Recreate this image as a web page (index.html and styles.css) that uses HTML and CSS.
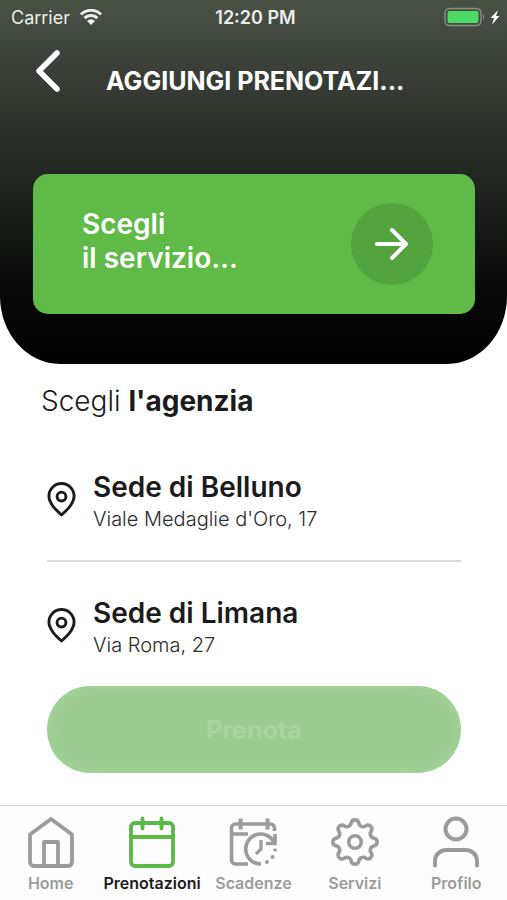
FILE: index.html
```html
<!DOCTYPE html>
<html lang="it">
<head>
<meta charset="utf-8">
<meta name="viewport" content="width=device-width, initial-scale=1">
<title>Aggiungi prenotazione</title>
<link rel="stylesheet" href="styles.css">
</head>
<body>
<div class="app">
  <header class="hero">
    <div class="status">
      <div class="status-left">
        <span>Carrier</span>
        <svg class="wifi" viewBox="0 0 22 16" aria-hidden="true">
          <path d="M1 5.400a14.200 14.200 0 0 1 20 0M4.600 9.100a9 9 0 0 1 12.800 0" fill="none" stroke="currentColor" stroke-width="3"/>
          <path d="M11 16l-4-4.100a5.700 5.700 0 0 1 8 0z" fill="currentColor"/>
        </svg>
      </div>
      <span class="clock">12:20 PM</span>
      <div class="status-right">
        <svg class="battery" viewBox="0 0 56 20" aria-hidden="true">
          <rect x="1" y="1.500" width="36" height="17" rx="4.500" fill="none" stroke="#8b8f89" stroke-width="1.400"/>
          <rect x="3.500" y="4" width="31" height="12" rx="2" fill="#4cd964"/>
          <path d="M39 7q2.500 3 0 6z" fill="#8b8f89"/>
          <path d="M54 3l-7.500 8h3.500l-2 6.500 7.500-8.500h-3.500z" fill="#fff"/>
        </svg>
      </div>
    </div>
    <div class="navbar">
      <button class="back" type="button" aria-label="Indietro">
        <svg viewBox="0 0 24 42" aria-hidden="true"><path d="M21 3L3 21l18 18" fill="none" stroke="currentColor" stroke-width="5.500" stroke-linecap="round" stroke-linejoin="round"/></svg>
      </button>
      <h1>AGGIUNGI PRENOTAZI...</h1>
    </div>
    <button class="service" type="button">
      <span class="service-label">Scegli<br>il servizio...</span>
      <span class="go">
        <svg viewBox="0 0 34 34" aria-hidden="true"><path d="M2 17h29M17 3l14 14-14 14" fill="none" stroke="currentColor" stroke-width="4" stroke-linecap="round" stroke-linejoin="round"/></svg>
      </span>
    </button>
  </header>

  <main class="content">
    <h2>Scegli <strong>l'agenzia</strong></h2>
    <ul class="agencies">
      <li>
        <button class="agency" type="button">
          <svg class="pin" viewBox="0 0 30 36" aria-hidden="true"><g fill="none" stroke="currentColor" stroke-width="3" stroke-linejoin="round"><path d="M15 34C9 28.500 2 22 2 14.500a13 13 0 0 1 26 0C28 22 21 28.500 15 34z"/><circle cx="15" cy="15" r="4.600"/></g></svg>
          <span class="agency-text"><span class="name">Sede di Belluno</span><span class="address">Viale Medaglie d'Oro, 17</span></span>
        </button>
      </li>
      <li>
        <button class="agency" type="button">
          <svg class="pin" viewBox="0 0 30 36" aria-hidden="true"><g fill="none" stroke="currentColor" stroke-width="3" stroke-linejoin="round"><path d="M15 34C9 28.500 2 22 2 14.500a13 13 0 0 1 26 0C28 22 21 28.500 15 34z"/><circle cx="15" cy="15" r="4.600"/></g></svg>
          <span class="agency-text"><span class="name">Sede di Limana</span><span class="address">Via Roma, 27</span></span>
        </button>
      </li>
    </ul>
    <button class="book" type="button" disabled>Prenota</button>
  </main>

  <nav class="tabs">
    <a href="#home">
      <svg viewBox="0 0 52 52" aria-hidden="true"><g fill="none" stroke="currentColor" stroke-width="3.800" stroke-linejoin="round"><path d="M5 18.500L26 3l21 15.500V46a4 4 0 0 1-4 4H9a4 4 0 0 1-4-4z"/><path d="M19 50V26h14v24"/></g></svg>
      <span>Home</span>
    </a>
    <a href="#prenotazioni" class="active" aria-current="page">
      <svg viewBox="0 0 52 52" aria-hidden="true"><g fill="none" stroke="currentColor" stroke-width="3.800" stroke-linecap="round"><rect x="5" y="7" width="42" height="43" rx="4"/><path d="M5 21h42M16.500 2.500v10M35.500 2.500v10"/></g></svg>
      <span>Prenotazioni</span>
    </a>
    <a href="#scadenze">
      <svg viewBox="0 0 52 52" aria-hidden="true"><g fill="none" stroke="currentColor" stroke-width="3.600"><path d="M21 48H8.500a4 4 0 0 1-4-4V12a4 4 0 0 1 4-4h35a4 4 0 0 1 4 4v3M4.500 18H21"/><path d="M13.500 2.500v11M40.500 2.500v11" stroke-width="4"/><path d="M34 48A15 15 0 1 1 47 26"/><path d="M48 18v9.500H39"/><path d="M34 24v9l-5 5" stroke-width="3.200"/></g><g fill="currentColor"><circle cx="48" cy="34" r="1.800"/><circle cx="45.500" cy="41" r="2"/><circle cx="40" cy="46" r="2"/></g></svg>
      <span>Scadenze</span>
    </a>
    <a href="#servizi">
      <svg viewBox="0 0 48 48" aria-hidden="true"><g fill="none" stroke="currentColor" stroke-width="3.300"><path d="M41.650 20.490A3.600 3.600 0 0 1 41.650 27.510A4 4 0 0 0 38.970 34A3.600 3.600 0 0 1 34 38.970A4 4 0 0 0 27.510 41.650A3.600 3.600 0 0 1 20.490 41.650A4 4 0 0 0 14 38.970A3.600 3.600 0 0 1 9.030 34A4 4 0 0 0 6.350 27.510A3.600 3.600 0 0 1 6.350 20.490A4 4 0 0 0 9.030 14A3.600 3.600 0 0 1 14 9.030A4 4 0 0 0 20.490 6.350A3.600 3.600 0 0 1 27.510 6.350A4 4 0 0 0 34 9.030A3.600 3.600 0 0 1 38.970 14A4 4 0 0 0 41.650 20.490z"/><circle cx="24" cy="24" r="5.800"/></g></svg>
      <span>Servizi</span>
    </a>
    <a href="#profilo">
      <svg viewBox="0 0 52 52" aria-hidden="true"><g fill="none" stroke="currentColor" stroke-width="4" stroke-linecap="round"><circle cx="26" cy="13" r="10.500"/><path d="M5 49.500V45a11 11 0 0 1 11-11h20a11 11 0 0 1 11 11v4.500"/></g></svg>
      <span>Profilo</span>
    </a>
  </nav>
</div>
</body>
</html>
```
FILE: styles.css
```css
* { box-sizing: border-box; }

body {
  margin: 0;
  background: #fff;
  color: #1b1b1b;
  font-family: Inter, "Liberation Sans", sans-serif;
}

button {
  border: 0;
  padding: 0;
  background: none;
  color: inherit;
  font: inherit;
  text-align: left;
}

svg { display: block; flex: none; }

.app {
  display: flex;
  flex-direction: column;
  min-height: 100vh;
}

/* Header */
.hero {
  padding-bottom: 50px;
  border-radius: 0 0 60px 60px / 0 0 68px 68px;
  background: linear-gradient(#495145 0, #2c302b 36%, #232722 48%, #080808 80%, #000 100%);
  color: #fff;
}

.status {
  display: grid;
  grid-template-columns: 1fr auto 1fr;
  align-items: center;
  height: 34px;
  padding: 0 7px 0 11px;
  font-size: 18px;
  color: #eceeeb;
}

.status-left { display: flex; align-items: center; gap: 10px; }
.status-right { display: flex; justify-content: flex-end; }
.clock { font-weight: 600; }
.wifi { width: 22px; height: 16px; }
.battery { width: 56px; height: 20px; }

.navbar {
  display: flex;
  align-items: flex-start;
  gap: 46px;
  height: 140px;
  padding: 16px 36px 0;
}

.back svg { width: 24px; height: 42px; }

.navbar h1 {
  margin: 14px 0 0;
  font-size: 25px;
  line-height: 34px;
  font-weight: 700;
  white-space: nowrap;
}

.service {
  display: flex;
  align-items: center;
  justify-content: space-between;
  width: calc(100% - 65px);
  height: 140px;
  margin: 0 32px 0 33px;
  padding: 0 42px 0 49px;
  border-radius: 15px;
  background: #5fba47;
  font-size: 28px;
  line-height: 34px;
  font-weight: 600;
}

.service-label { padding-bottom: 6px; }

.go {
  display: grid;
  place-items: center;
  width: 82px;
  height: 82px;
  border-radius: 50%;
  background: #53a43e;
}

.go svg { width: 34px; height: 34px; }

/* Agency choice */
.content {
  flex: 1;
  padding: 19px 46px 32px 47px;
}

.content h2 {
  margin: 0 -6px 17px;
  font-size: 28px;
  line-height: 36px;
  font-weight: 300;
}

.content strong { font-weight: 700; }

.agencies { margin: 0; padding: 0; list-style: none; }
.agencies li + li { border-top: 2px solid #dcdcdc; }

.agency {
  display: flex;
  align-items: flex-start;
  gap: 17px;
  width: 100%;
  padding: 33px 0 27px;
}

.pin { width: 29px; height: 35px; margin-top: 13px; }
.agency-text { display: grid; }
.name { font-size: 28px; line-height: 36px; font-weight: 600; }
.address { font-size: 20px; line-height: 28px; font-weight: 300; color: #2c2c2c; }

.book {
  display: block;
  width: 100%;
  height: 87px;
  border-radius: 44px;
  background: #9dcc92;
  box-shadow: inset 0 0 16px #a3d699;
  color: #a9d6a0;
  font-size: 25px;
  font-weight: 700;
  text-align: center;
}

/* Bottom tabs */
.tabs {
  display: grid;
  grid-template-columns: repeat(5, 1fr);
  padding: 10px 0 7px;
  border-top: 1px solid #d4d4d4;
  background: #fdfdfd;
}

.tabs a {
  display: flex;
  flex-direction: column;
  align-items: center;
  gap: 5px;
  color: #9b9b9b;
  font-size: 16px;
  line-height: 20px;
  font-weight: 600;
  text-decoration: none;
}

.tabs svg { width: 52px; height: 52px; }
.tabs .active { color: #1b1b1b; }
.tabs .active svg { color: #5bb947; }
```
